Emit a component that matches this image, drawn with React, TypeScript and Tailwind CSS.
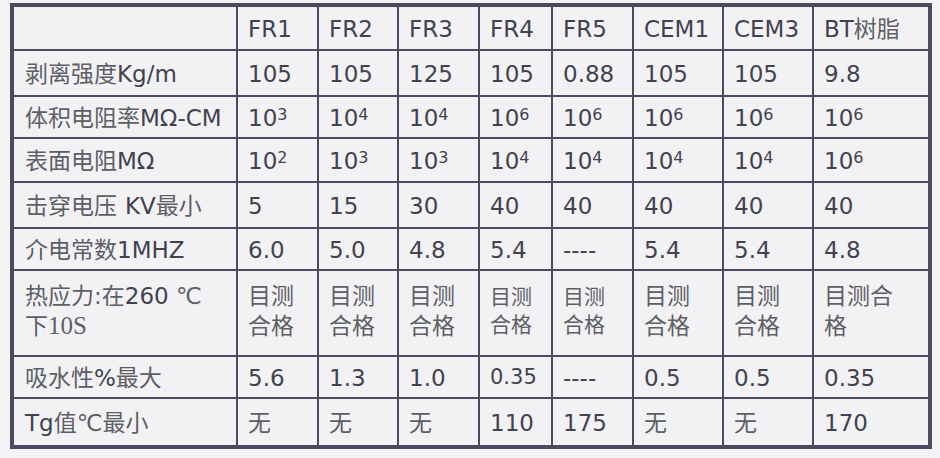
import React from "react";

type Cell = string | React.ReactNode;

const cjk = "text-[#5e5e66]";

function Cn({ children }: { children: React.ReactNode }) {
  return <span className={cjk}>{children}</span>;
}

// 10 to the power n, superscript top-aligned with the digits
function Pow({ n }: { n: string }) {
  return (
    <span>
      10
      <span className="relative -top-[6px] text-[16px]">{n}</span>
    </span>
  );
}

const twoLine = (small?: boolean) => (
  <div className={`${cjk} ${small ? "text-[21px] leading-[28px]" : "leading-[30px]"}`}>
    目测
    <br />
    合格
  </div>
);

const rows: { h: string; label: Cell; cells: Cell[]; pad?: string }[] = [
  {
    h: "h-[44px]",
    label: (
      <>
        <Cn>剥离强度</Cn>Kg/m
      </>
    ),
    cells: ["105", "105", "125", "105", "0.88", "105", "105", "9.8"],
  },
  {
    h: "h-[40px]",
    label: (
      <>
        <Cn>体积电阻率</Cn>MΩ-CM
      </>
    ),
    cells: ["3", "4", "4", "6", "6", "6", "6", "6"].map((n, i) => <Pow key={i} n={n} />),
  },
  {
    h: "h-[42px]",
    label: (
      <>
        <Cn>表面电阻</Cn>MΩ
      </>
    ),
    cells: ["2", "3", "3", "4", "4", "4", "4", "6"].map((n, i) => <Pow key={i} n={n} />),
  },
  {
    h: "h-[44px]",
    label: (
      <>
        <Cn>击穿电压</Cn>
        <span className="ml-[8px]">KV</span>
        <Cn>最小</Cn>
      </>
    ),
    cells: ["5", "15", "30", "40", "40", "40", "40", "40"],
  },
  {
    h: "h-[40px]",
    label: (
      <>
        <Cn>介电常数</Cn>1MHZ
      </>
    ),
    cells: ["6.0", "5.0", "4.8", "5.4", "----", "5.4", "5.4", "4.8"],
  },
  {
    h: "h-[84px]",
    pad: "pb-[4px]",
    label: (
      <div className="leading-[30px]">
        <Cn>热应力:在</Cn>260 <Cn>℃</Cn>
        <br />
        <Cn>下</Cn>
        <span className="font-['Liberation_Serif'] text-[25px] text-[#5e5e66]">10S</span>
      </div>
    ),
    cells: [
      twoLine(),
      twoLine(),
      twoLine(),
      twoLine(true),
      twoLine(true),
      twoLine(),
      twoLine(),
      <div className={`leading-[30px] ${cjk}`}>
        目测合
        <br />格
      </div>,
    ],
  },
  {
    h: "h-[40px]",
    label: (
      <>
        <Cn>吸水性</Cn>%<Cn>最大</Cn>
      </>
    ),
    cells: [
      "5.6",
      "1.3",
      "1.0",
      <span className="text-[21px]">0.35</span>,
      "----",
      "0.5",
      "0.5",
      "0.35",
    ],
  },
  {
    h: "h-[46px]",
    label: (
      <>
        Tg<Cn>值℃最小</Cn>
      </>
    ),
    cells: [<Cn>无</Cn>, <Cn>无</Cn>, <Cn>无</Cn>, "110", "175", <Cn>无</Cn>, <Cn>无</Cn>, "170"],
  },
];

const heads: Cell[] = [
  "FR1",
  "FR2",
  "FR3",
  "FR4",
  "FR5",
  "CEM1",
  "CEM3",
  <>
    BT<Cn>树脂</Cn>
  </>,
];

export default function App() {
  return (
    <div className="w-[940px] h-[458px] bg-[#f3f3f6] pt-[3px] pl-[10px] font-['DejaVu_Sans','Noto_Sans_CJK_SC',sans-serif] text-[23px] text-[#42424f]">
      <div className="w-[922px] border-4 border-[#4a4a60] bg-[#4a4a60]">
        <div className="grid grid-cols-[222px_79px_78px_79px_71px_79px_88px_88px_114px] gap-[2px]">
          <div className="h-[42px] bg-[#f2f2f5]" />
          {heads.map((c, i) => (
            <div key={i} className="h-[42px] bg-[#f2f2f5] flex items-center pl-[10px] pt-[3px]">
              {c}
            </div>
          ))}
          {rows.map((r, ri) => (
            <React.Fragment key={ri}>
              <div
                className={`${r.h} ${r.pad ?? "pt-[2px]"} bg-[#f2f2f5] flex items-center pl-[11px] whitespace-nowrap`}
              >
                {r.label}
              </div>
              {r.cells.map((c, ci) => (
                <div
                  key={ci}
                  className={`${r.h} ${r.pad ?? "pt-[2px]"} bg-[#f2f2f5] flex items-center pl-[10px] whitespace-nowrap`}
                >
                  {c}
                </div>
              ))}
            </React.Fragment>
          ))}
        </div>
      </div>
    </div>
  );
}
